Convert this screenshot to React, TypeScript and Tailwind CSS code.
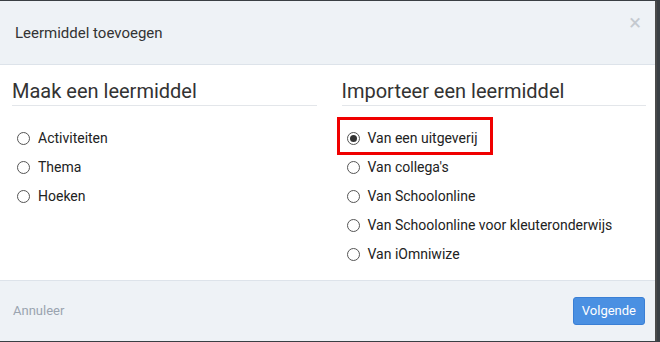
import React from "react";

function Radio({ checked }: { checked?: boolean }) {
  return (
    <span className="w-[13px] h-[13px] rounded-full border border-[#555] flex items-center justify-center bg-white shrink-0">
      {checked && <span className="w-[7px] h-[7px] rounded-full bg-[#333]" />}
    </span>
  );
}

function Option({ label, checked }: { label: string; checked?: boolean }) {
  return (
    <div className="flex items-center h-[29px] pl-[5px] gap-[8px] text-[14px] text-[#222]">
      <Radio checked={checked} />
      <span>{label}</span>
    </div>
  );
}

export default function App() {
  return (
    <div
      className="w-[660px] h-[342px] bg-[#3a3f44] pt-[1px] overflow-hidden"
      style={{ fontFamily: "Roboto, 'Liberation Sans', sans-serif" }}
    >
      <div className="w-[655px] h-[340px] bg-white flex flex-col border-r-2 border-[#4a4a4a] box-content">
        <div className="h-[64px] shrink-0 bg-[#eef2f6] border-b border-[#dde3ea] flex items-center justify-between pl-[15px] pr-[14px]">
          <span className="text-[15px] text-[#333] mt-[2px]">Leermiddel toevoegen</span>
          <span className="text-[#c4c9cf] text-[22px] leading-none -mt-[19px]">×</span>
        </div>
        <div className="flex-1 grid grid-cols-2 gap-[25px] pl-[12px] pr-[9px] pt-[13px]">
          <div>
            <h2 className="text-[20px] text-[#333] leading-[26px] pb-[1px] border-b border-[#e3e6ea]">
              Maak een leermiddel
            </h2>
            <div className="mt-[18px]">
              <Option label="Activiteiten" />
              <Option label="Thema" />
              <Option label="Hoeken" />
            </div>
          </div>
          <div>
            <h2 className="text-[20px] text-[#333] leading-[26px] pb-[1px] border-b border-[#e3e6ea]">
              Importeer een leermiddel
            </h2>
            <div className="mt-[18px]">
              <div className="relative">
                <Option label="Van een uitgeverij" checked />
                <div className="absolute left-[-5px] top-[-7px] bottom-[-2px] w-[156px] border-[3px] border-[#f00000]" />
              </div>
              <Option label="Van collega's" />
              <Option label="Van Schoolonline" />
              <Option label="Van Schoolonline voor kleuteronderwijs" />
              <Option label="Van iOmniwize" />
            </div>
          </div>
        </div>
        <div className="h-[61px] shrink-0 bg-[#eef2f6] border-t border-[#dde3ea] flex items-center justify-between pl-[13px] pr-[10px]">
          <span className="text-[13px] text-[#9aa4b0]">Annuleer</span>
          <button className="h-[28px] px-[8px] rounded-[3px] bg-[#4a90e2] border border-[#3a7fd5] text-white text-[13px]">
            Volgende
          </button>
        </div>
      </div>
    </div>
  );
}
